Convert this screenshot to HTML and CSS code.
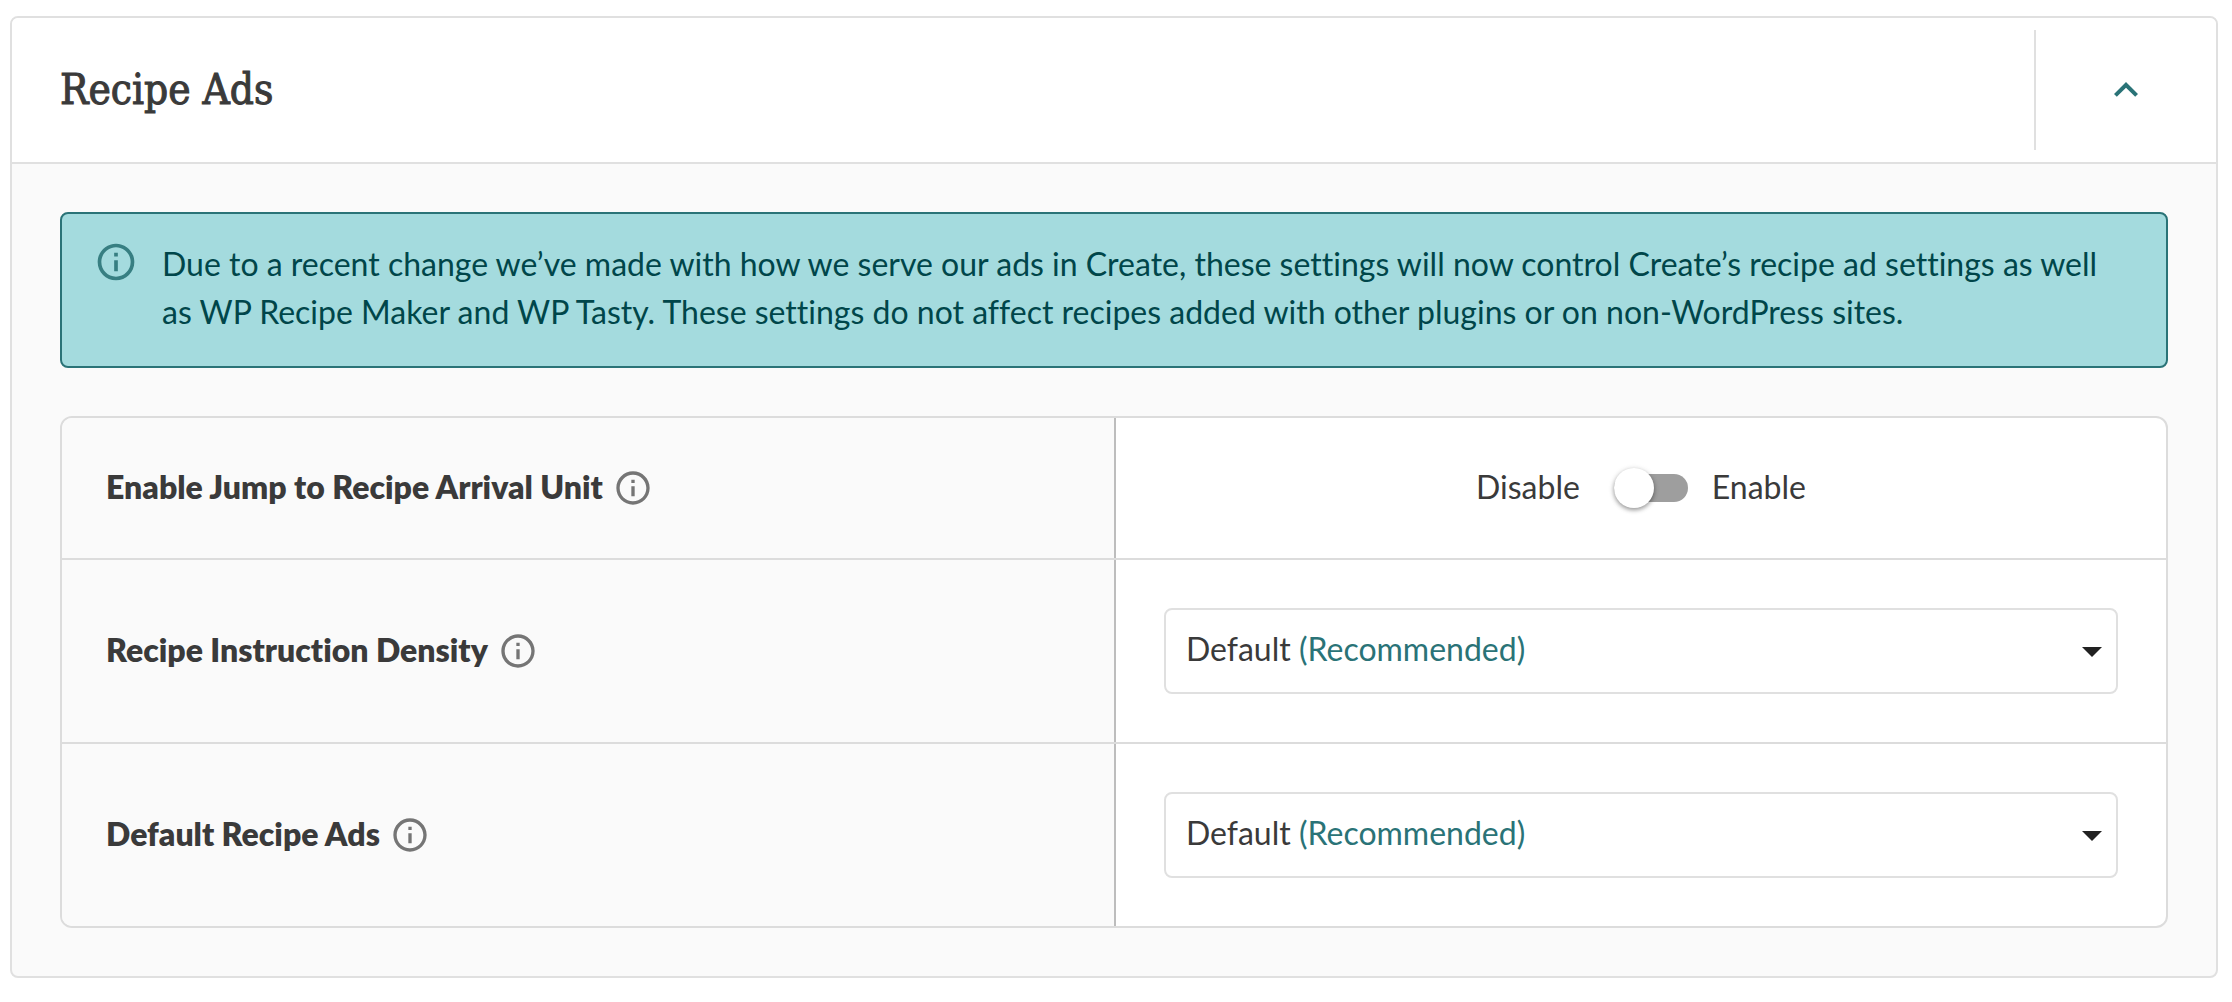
FILE: index.html
```html
<!DOCTYPE html>
<html lang="en">
<head>
    <meta charset="UTF-8">
    <meta name="viewport" content="width=device-width, initial-scale=1.0">
    <title>Recipe Ads</title>
    <link rel="stylesheet" href="styles.css">
</head>
<body>
    <!-- shared info icon -->
    <svg class="sprite" aria-hidden="true">
        <symbol id="info" viewBox="0 0 24 24">
            <path d="M11 7h2v2h-2zm0 4h2v6h-2zm1-9C6.48 2 2 6.48 2 12s4.48 10 10 10 10-4.48 10-10S17.52 2 12 2zm0 18c-4.41 0-8-3.59-8-8s3.59-8 8-8 8 3.59 8 8-3.59 8-8 8z"/>
        </symbol>
    </svg>

    <section class="card">
        <header class="card-header">
            <h2 class="card-title">Recipe Ads</h2>
            <button class="collapse" type="button" aria-label="Collapse" aria-expanded="true">
                <svg viewBox="0 0 24 24" width="48" height="48"><path d="M12 8l-6 6 1.41 1.41L12 10.83l4.59 4.58L18 14z"/></svg>
            </button>
        </header>

        <div class="card-body">
            <div class="notice">
                <svg class="notice-icon" aria-hidden="true"><use href="#info"/></svg>
                <p class="notice-text">Due to a recent change we’ve made with how we serve our ads in Create, these settings will now control Create’s recipe ad settings as well as WP Recipe Maker and WP Tasty. These settings do not affect recipes added with other plugins or on non-WordPress sites.</p>
            </div>

            <div class="settings">
                <div class="row">
                    <div class="name">
                        <label for="jump">Enable Jump to Recipe Arrival Unit</label>
                        <button class="help" type="button" aria-label="More info"><svg><use href="#info"/></svg></button>
                    </div>
                    <div class="control switch-control">
                        <span>Disable</span>
                        <input class="switch" id="jump" type="checkbox" role="switch">
                        <span>Enable</span>
                    </div>
                </div>
                <div class="row">
                    <div class="name">
                        <label for="density">Recipe Instruction Density</label>
                        <button class="help" type="button" aria-label="More info"><svg><use href="#info"/></svg></button>
                    </div>
                    <div class="control">
                        <select class="select" id="density">
                            <button><selectedcontent></selectedcontent></button>
                            <option selected>Default <span class="hint">(Recommended)</span></option>
                        </select>
                    </div>
                </div>
                <div class="row">
                    <div class="name">
                        <label for="ads">Default Recipe Ads</label>
                        <button class="help" type="button" aria-label="More info"><svg><use href="#info"/></svg></button>
                    </div>
                    <div class="control">
                        <select class="select" id="ads">
                            <button><selectedcontent></selectedcontent></button>
                            <option selected>Default <span class="hint">(Recommended)</span></option>
                        </select>
                    </div>
                </div>
            </div>
        </div>
    </section>
</body>
</html>
```
FILE: styles.css
```css
* {
    box-sizing: border-box;
}

body {
    margin: 0;
    padding: 16px 14px 24px 10px;
    background-color: #fff;
    color: #3a3a3a;
    font-family: Lato, "Open Sans", sans-serif;
    font-size: 32px;
    font-variant-ligatures: none;
    line-height: 48px;
}

button {
    padding: 0;
    border: 0;
    background: none;
    font: inherit;
    color: inherit;
    cursor: pointer;
}

svg {
    display: block;
    fill: currentColor;
}

.sprite {
    display: none;
}

.card {
    border: 2px solid #e0e0e0;
    border-radius: 8px;
    background-color: #fafafa;
    overflow: hidden;
}

.card-header {
    display: flex;
    align-items: center;
    justify-content: space-between;
    padding: 12px 0 12px 48px;
    border-bottom: 2px solid #e0e0e0;
    background-color: #fff;
}

.card-title {
    margin: 0;
    font-family: "DejaVu Serif Condensed", "DejaVu Serif", serif;
    font-size: 42px;
    font-weight: 400;
    -webkit-text-stroke: 1px currentColor;
}

.collapse {
    display: flex;
    align-items: center;
    justify-content: center;
    width: 182px;
    height: 120px;
    border-left: 2px solid #e0e0e0;
    color: #2a7377;
}

.card-body {
    display: flex;
    flex-direction: column;
    gap: 48px;
    padding: 48px;
}

.notice {
    display: flex;
    gap: 24px;
    padding: 26px 48px 26px 32px;
    border: 2px solid #2a7377;
    border-radius: 8px;
    background-color: #a4dbde;
    color: #00464a;
}

.notice-icon {
    flex: none;
    width: 44px;
    height: 44px;
    color: #377f82;
}

.notice-text {
    margin: 0;
    padding-bottom: 4px;
}

.settings {
    border: 2px solid #dcdcdc;
    border-radius: 12px;
    background-color: #fff;
    overflow: hidden;
}

.row {
    display: grid;
    grid-template-columns: 1fr 1fr;
    min-height: 140px;
}

.row + .row {
    border-top: 2px solid #dcdcdc;
}

.name {
    display: flex;
    align-items: center;
    gap: 10px;
    padding: 0 44px;
    background-color: #fafafa;
    font-weight: 800;
}

.name label {
    padding-bottom: 2px;
}

.help {
    color: #757575;
}

.help svg {
    width: 40px;
    height: 40px;
}

.control {
    padding: 48px;
    border-left: 2px solid #bdbdbd;
}

.switch-control {
    display: flex;
    align-items: center;
    justify-content: center;
    gap: 24px;
    padding: 0 48px;
}

.switch-control span {
    padding-bottom: 2px;
}

.switch {
    appearance: none;
    display: flex;
    align-items: center;
    width: 74px;
    height: 28px;
    margin: 0 0 0 10px;
    border-radius: 14px;
    background-color: #9e9e9e;
    cursor: pointer;
}

.switch::before {
    content: "";
    width: 40px;
    height: 40px;
    border-radius: 50%;
    background-color: #fff;
    box-shadow: 0 2px 4px rgba(0, 0, 0, 0.35), 0 1px 6px rgba(0, 0, 0, 0.12);
}

.switch:checked {
    justify-content: flex-end;
    background-color: #2a7377;
}

.select {
    appearance: base-select;
    display: flex;
    align-items: center;
    width: 100%;
    height: 86px;
    padding: 0 14px 4px 20px;
    border: 2px solid #e0e0e0;
    border-radius: 8px;
    background-color: #fff;
    color: inherit;
    font: inherit;
}

.select::picker-icon {
    content: "";
    margin-top: 6px;
    border: 10px solid transparent;
    border-top-color: #212121;
    border-bottom: 0;
}

.hint {
    color: #2a7377;
}
```
